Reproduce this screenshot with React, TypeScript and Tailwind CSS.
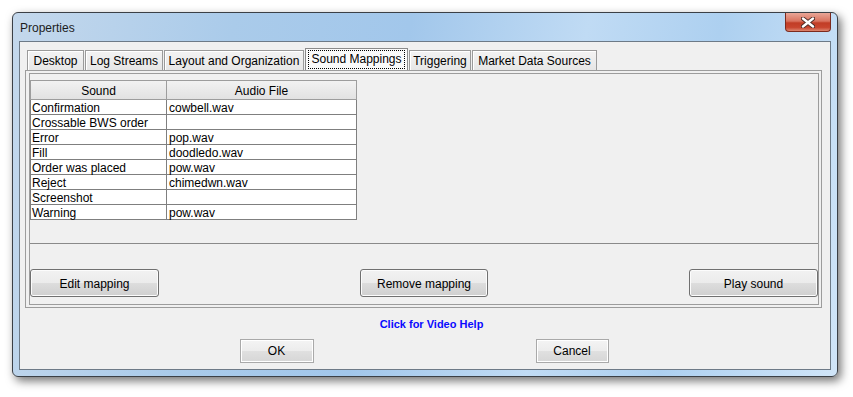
const tabs = [
  { label: "Desktop", w: "w-[57px]" },
  { label: "Log Streams", w: "w-[78px]" },
  { label: "Layout and Organization", w: "w-[140px]" },
  { label: "Sound Mappings", w: "w-[103px]", selected: true },
  { label: "Triggering", w: "w-[62px]" },
  { label: "Market Data Sources", w: "w-[125px]" },
];

const mappings: [string, string][] = [
  ["Confirmation", "cowbell.wav"],
  ["Crossable BWS order", ""],
  ["Error", "pop.wav"],
  ["Fill", "doodledo.wav"],
  ["Order was placed", "pow.wav"],
  ["Reject", "chimedwn.wav"],
  ["Screenshot", ""],
  ["Warning", "pow.wav"],
];

const CloseButton = () => (
  <div className="w-[46px] h-[19px] rounded-b-[4px] border border-t-0 border-[#7c2a1e] bg-[linear-gradient(180deg,#e9a697_0%,#d9735f_45%,#c13d26_55%,#c8452e_80%,#dc8670_100%)] flex items-center justify-center">
    <svg width="14" height="11" viewBox="0 0 14 11">
      <path d="M2 1.5 L12 9.5 M12 1.5 L2 9.5" stroke="#4a2a26" strokeWidth="4.2" strokeLinecap="round" />
      <path d="M2 1.5 L12 9.5 M12 1.5 L2 9.5" stroke="#ffffff" strokeWidth="2.4" strokeLinecap="round" />
    </svg>
  </div>
);

const Button = ({ label, w }: { label: string; w: string }) => (
  <div
    className={`${w} h-[28px] rounded-[3px] border border-[#707070] bg-[linear-gradient(180deg,#f2f2f2_0%,#ebebeb_50%,#dddddd_51%,#cfcfcf_100%)] shadow-[inset_0_0_0_1px_#fcfcfc] flex items-center justify-center pt-[1px] text-[12px] text-black`}
  >
    {label}
  </div>
);

const DialogButton = ({ label, w }: { label: string; w: string }) => (
  <div
    className={`${w} h-[24px] border border-[#a9a9a9] bg-[linear-gradient(180deg,#f4f4f4_0%,#ececec_50%,#e0e0e0_51%,#d6d6d6_100%)] shadow-[inset_0_0_0_1px_#ffffff] flex items-center justify-center text-[12px] text-black`}
  >
    {label}
  </div>
);

export default function App() {
  return (
    <div
      className="w-[853px] h-[397px] bg-white overflow-hidden pl-[12px] pt-[12px]"
      style={{ fontFamily: '"Liberation Sans", Arial, sans-serif' }}
    >
      {/* window frame */}
      <div className="w-[826px] h-[365px] rounded-[6px] border border-[#3b4046] shadow-[3px_4px_10px_rgba(0,0,0,0.55)] bg-[linear-gradient(100deg,#c4d8ec_0%,#aacbea_25%,#a2c7eb_45%,#c0dbf4_65%,#add0f0_80%,#d0e5f8_100%)] flex flex-col px-[6px] pb-[6px]">
        <div className="h-[28px] flex justify-between items-start">
          <span className="ml-[1px] mt-[6px] text-[12px] text-[#1c1c1c]">Properties</span>
          <CloseButton />
        </div>

        {/* client area */}
        <div className="flex-1 border border-[#6d7a87] bg-[#f0f0f0] pt-[6px] pl-[5px] pr-[8px] flex flex-col">
          <div className="h-[22px] ml-[2px] flex items-end gap-[1px]">
            {tabs.map((t) =>
              t.selected ? (
                <div
                  key={t.label}
                  className={`${t.w} h-[22px] border border-b-0 border-[#8a8a8a] bg-[#fafafa] flex items-start justify-center pt-[1px]`}
                >
                  <span className="px-[2px] h-[19px] leading-[17px] border border-dotted border-black text-[12px] text-black">
                    {t.label}
                  </span>
                </div>
              ) : (
                <div
                  key={t.label}
                  className={`${t.w} h-[20px] border border-b-0 border-[#9a9a9a] bg-[linear-gradient(180deg,#f3f3f3_0%,#e6e6e6_100%)] shadow-[inset_1px_1px_0_#ffffff] flex items-center justify-center text-[12px] text-black`}
                >
                  {t.label}
                </div>
              )
            )}
          </div>

          {/* tab panel */}
          <div className="h-[238px] border border-[#9c9c9c] pt-[2px] pb-[2px] pl-[3px] pr-[2px] flex">
            <div className="flex-1 border border-[#9c9c9c] flex flex-col pt-[6px]">
              <div className="h-[164px] border-b border-[#8a8a8a]">
                <div className="w-[327px] text-[12px] text-black">
                  <div className="flex h-[20px]">
                    <div className="w-[137px] border border-[#9d9d9d] bg-[linear-gradient(180deg,#f2f2f2_0%,#e2e2e2_100%)] flex items-center justify-center pt-[1px]">
                      Sound
                    </div>
                    <div className="w-[190px] border border-l-0 border-[#9d9d9d] bg-[linear-gradient(180deg,#f2f2f2_0%,#e2e2e2_100%)] flex items-center justify-center pt-[1px]">
                      Audio File
                    </div>
                  </div>
                  {mappings.map(([sound, file]) => (
                    <div key={sound} className="flex h-[15px] bg-white">
                      <div className="w-[137px] border-l border-r border-b border-[#7f7f7f] pl-[1px] leading-[16px]">
                        {sound}
                      </div>
                      <div className="w-[190px] border-r border-b border-[#7f7f7f] pl-[2px] leading-[16px]">
                        {file}
                      </div>
                    </div>
                  ))}
                </div>
              </div>
              <div className="pt-[25px] flex justify-between">
                <Button label="Edit mapping" w="w-[129px]" />
                <Button label="Remove mapping" w="w-[128px]" />
                <Button label="Play sound" w="w-[129px]" />
              </div>
            </div>
          </div>

          <div className="mt-[9px] h-[14px] pl-[16px] flex justify-center">
            <span className="text-[11px] leading-[14px] font-bold text-[#0a0aff]">Click for Video Help</span>
          </div>

          <div className="mt-[8px] flex justify-center gap-[222px] pl-[1px]">
            <DialogButton label="OK" w="w-[74px]" />
            <DialogButton label="Cancel" w="w-[73px]" />
          </div>
        </div>
      </div>
    </div>
  );
}
